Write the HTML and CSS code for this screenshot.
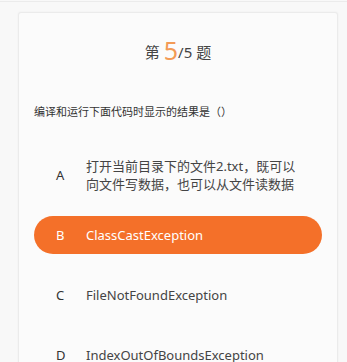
FILE: index.html
```html
<!DOCTYPE html>
<html lang="zh-CN">
<head>
<meta charset="utf-8">
<link rel="stylesheet" href="styles.css">
</head>
<body>
<div class="topline"></div>
<div class="page">
  <div class="card">
    <div class="title">第 <span class="num">5</span>/5 题</div>
    <div class="question">编译和运行下面代码时显示的结果是（）</div>
    <div class="options">
      <div class="option">
        <span class="letter">A</span>
        <span class="text">打开当前目录下的文件2.txt，既可以向文件写数据，也可以从文件读数据</span>
      </div>
      <div class="option selected">
        <span class="letter">B</span>
        <span class="text">ClassCastException</span>
      </div>
      <div class="option">
        <span class="letter">C</span>
        <span class="text">FileNotFoundException</span>
      </div>
      <div class="option">
        <span class="letter">D</span>
        <span class="text">IndexOutOfBoundsException</span>
      </div>
    </div>
  </div>
</div>
</body>
</html>
```
FILE: styles.css
```css
html, body {
  margin: 0;
  padding: 0;
  height: 100%;
  overflow: hidden;
}
body {
  background: #f8f8f8;
  font-family: "Noto Sans", "Noto Sans CJK SC", sans-serif;
  color: #444;
}
.topline {
  height: 1px;
  margin-top: 1px;
  background: #ebebeb;
}
.page {
  padding: 10px 9px 0 18px;
}
.card {
  background: #fbfbfb;
  border: 1px solid #ebebeb;
  border-radius: 3px;
  box-shadow: 0 0 2px rgba(0,0,0,0.06);
  height: 400px;
  box-sizing: border-box;
  padding: 22px 15px 0 15px;
}
.title {
  text-align: center;
  font-size: 15px;
  line-height: 30px;
  color: #444;
}
.title .num {
  color: #f39a55;
  font-size: 25px;
  vertical-align: -2px;
}
.question {
  margin-top: 36px;
  font-size: 11px;
  line-height: 18px;
  color: #333;
}
.options {
  margin-top: 35px;
  display: flex;
  flex-direction: column;
  gap: 22px;
}
.option {
  display: flex;
  align-items: center;
  height: 38px;
  padding: 0 22px 0 22px;
  border-radius: 19px;
  font-size: 13px;
  line-height: 18px;
}
.letter {
  width: 30px;
  flex: none;
  color: #333;
  font-size: 13px;
}
.text {
  max-width: 214px;
  color: #444;
}
.option.selected {
  background: #f47029;
}
.option.selected .letter,
.option.selected .text {
  color: #fff;
}
```
